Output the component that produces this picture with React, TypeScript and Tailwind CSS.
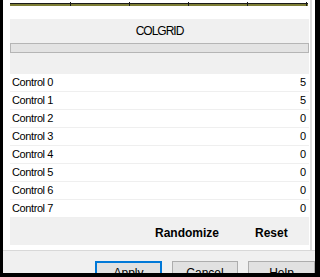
import React from "react";

const rows = [
  ["Control 0", "5"],
  ["Control 1", "5"],
  ["Control 2", "0"],
  ["Control 3", "0"],
  ["Control 4", "0"],
  ["Control 5", "0"],
  ["Control 6", "0"],
  ["Control 7", "0"],
];

export default function App() {
  const font = { fontFamily: '"Liberation Sans", Arial, sans-serif' };
  return (
    <div className="w-[320px] h-[277px] bg-black flex overflow-hidden" style={font}>
      <div className="ml-[3px] mr-[5px] mb-[4px] w-[312px] flex flex-col bg-white">
        <div className="h-[250px] flex">
          <div className="w-[7px]" />
          <div className="w-[299px] flex flex-col">
            <svg width="299" height="19" className="block">
              <rect x="0" y="3" width="298" height="1" fill="#1a1a1a" />
              <rect x="0" y="4" width="298" height="2" fill="#7d7d35" />
              {[60, 119, 178, 237, 296].map((x) => (
                <rect key={x} x={x} y="2" width="1" height="4" fill="#1a1a1a" />
              ))}
            </svg>
            <div className="h-[226px] bg-[#f0f0f0] flex flex-col">
              <div className="h-[24px] flex items-center justify-center text-[12px] leading-[14px] tracking-[-1px] text-black">
                COLGRID
              </div>
              <div className="h-[10px] border border-[#b5b5b5] bg-[#e3e3e3]" />
              <div className="h-[21px]" />
              <div className="flex flex-col">
                {rows.map(([label, value]) => (
                  <div
                    key={label}
                    className="h-[18px] bg-white border-b border-[#efefef] flex items-center justify-between pl-[2px] pr-[3px] text-[11px] leading-[17px] text-black"
                  >
                    <span className="tracking-[-0.4px]">{label}</span>
                    <span>{value}</span>
                  </div>
                ))}
              </div>
              <div className="h-[27px] flex items-start pt-[8px] text-[12px] leading-[14px] font-bold text-black">
                <span className="ml-[145px]">Randomize</span>
                <span className="ml-[36px]">Reset</span>
              </div>
            </div>
          </div>
          <div className="w-[1px]" />
          <div className="w-[2px] bg-[#dcdcdc]" />
          <div className="w-[3px]" />
        </div>
        <div className="flex-1 border-t border-[#d8d8d8] bg-[#f0f0f0] overflow-hidden">
          <div className="mt-[10px] flex gap-[10px] pl-[92px]">
            <div className="w-[67px] h-[23px] shrink-0 bg-[#e1e1e1] border-2 border-[#0078d7] flex items-center justify-center text-[12px] text-black">
              Apply
            </div>
            <div className="w-[66px] h-[23px] shrink-0 bg-[#e1e1e1] border border-[#adadad] flex items-center justify-center text-[12px] text-black">
              Cancel
            </div>
            <div className="w-[67px] h-[23px] shrink-0 bg-[#e1e1e1] border border-[#adadad] flex items-center justify-center text-[12px] text-black">
              Help
            </div>
          </div>
        </div>
      </div>
    </div>
  );
}
